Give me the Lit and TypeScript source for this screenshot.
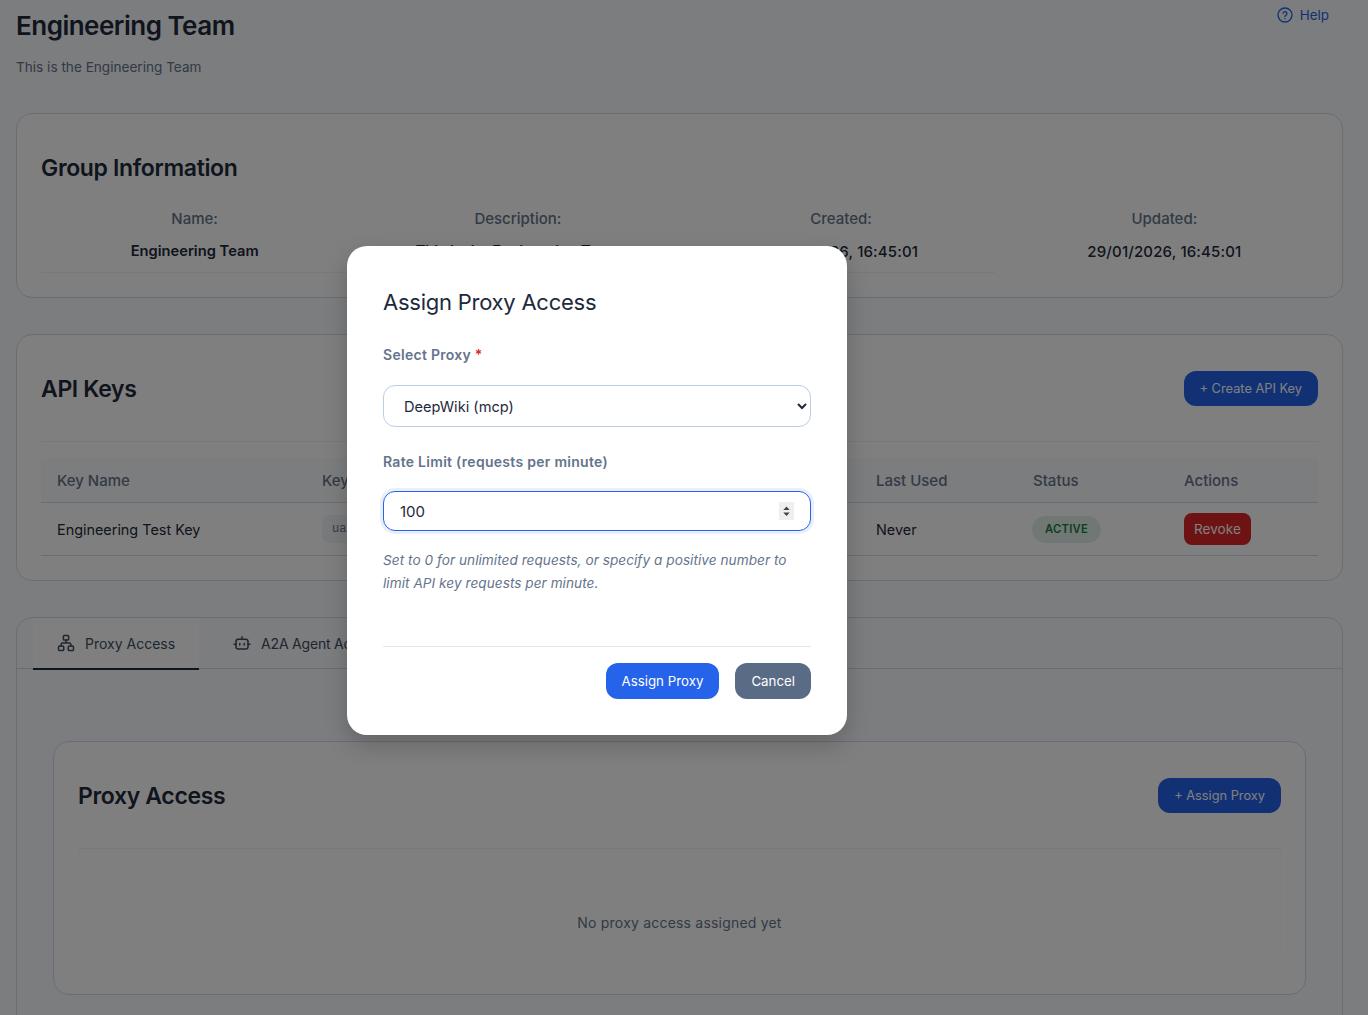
import {LitElement, html, css} from 'lit';
import {customElement} from 'lit/decorators.js';

const helpIcon = html`<svg class="help-icon" viewBox="0 0 24 24" fill="none" stroke="currentColor" stroke-width="2" stroke-linecap="round" stroke-linejoin="round"><circle cx="12" cy="12" r="10.5"/><path d="M9 9.2a3 3 0 0 1 5.9.8c0 2-3 2.6-3 4.2"/><path d="M12 17.6h.01"/></svg>`;

const proxyIcon = html`<svg class="tab-icon" viewBox="0 0 24 24" fill="none" stroke="currentColor" stroke-width="2" stroke-linecap="round" stroke-linejoin="round"><rect x="8.5" y="2" width="7" height="6" rx="1"/><rect x="2" y="16" width="7" height="6" rx="1.5"/><rect x="15" y="16" width="7" height="6" rx="1.5"/><path d="M12 8v4M5.5 16v-2a2 2 0 0 1 2-2h9a2 2 0 0 1 2 2v2"/></svg>`;

const botIcon = html`<svg class="tab-icon" viewBox="0 0 24 24" fill="none" stroke="currentColor" stroke-width="2" stroke-linecap="round" stroke-linejoin="round"><path d="M12 7V3.5"/><rect x="4" y="7" width="16" height="13" rx="3"/><path d="M1.5 13.5H4M20 13.5h2.5M9 12.5v2M15 12.5v2"/></svg>`;

@customElement('app-root')
export class AppRoot extends LitElement {
  render() {
    return html`
      <div class="page">
        <header class="head">
          <div>
            <h1>Engineering Team</h1>
            <p class="sub">This is the Engineering Team</p>
          </div>
          <a class="help">${helpIcon}Help</a>
        </header>

        <section class="card info">
          <h2>Group Information</h2>
          <div class="info-grid">
            <div class="info-item">
              <span class="info-label">Name:</span>
              <span class="info-value">Engineering Team</span>
            </div>
            <div class="info-item">
              <span class="info-label">Description:</span>
              <span class="info-value">This is the Engineering Team</span>
            </div>
            <div class="info-item">
              <span class="info-label">Created:</span>
              <span class="info-value date">29/01/2026, 16:45:01</span>
            </div>
            <div class="info-item last">
              <span class="info-label">Updated:</span>
              <span class="info-value date">29/01/2026, 16:45:01</span>
            </div>
          </div>
        </section>

        <section class="card keys">
          <div class="card-head">
            <h2>API Keys</h2>
            <button class="btn primary">+ Create API Key</button>
          </div>
          <table>
            <colgroup>
              <col class="c-name" /><col class="c-key" /><col class="c-created" />
              <col class="c-used" /><col class="c-status" /><col class="c-actions" />
            </colgroup>
            <thead>
              <tr>
                <th>Key Name</th><th>Key</th><th>Created</th>
                <th>Last Used</th><th>Status</th><th>Actions</th>
              </tr>
            </thead>
            <tbody>
              <tr>
                <td>Engineering Test Key</td>
                <td><code>uag_••••••••</code></td>
                <td>29/01/2026</td>
                <td>Never</td>
                <td><span class="badge">ACTIVE</span></td>
                <td><button class="btn danger">Revoke</button></td>
              </tr>
            </tbody>
          </table>
        </section>

        <section class="card tabs-card">
          <nav class="tabs">
            <div class="tab active">${proxyIcon}Proxy Access</div>
            <div class="tab agent">${botIcon}A2A Agent Access</div>
          </nav>
          <div class="tab-body">
            <div class="card inner">
              <div class="card-head">
                <h2>Proxy Access</h2>
                <button class="btn primary">+ Assign Proxy</button>
              </div>
              <div class="empty">No proxy access assigned yet</div>
            </div>
          </div>
        </section>
      </div>

      <div class="overlay"></div>
      <div class="modal">
        <h3>Assign Proxy Access</h3>
        <label class="select-label">Select Proxy <span class="req">*</span></label>
        <select>
          <option>DeepWiki (mcp)</option>
        </select>
        <label class="rate-label">Rate Limit (requests per minute)</label>
        <input type="number" value="100" />
        <p class="hint">Set to 0 for unlimited requests, or specify a positive number to limit API key requests per minute.</p>
        <div class="actions">
          <button class="btn modal-btn assign">Assign Proxy</button>
          <button class="btn modal-btn cancel">Cancel</button>
        </div>
      </div>
    `;
  }

  static get styles() {
    return css`
      :host {
        display: block;
        position: relative;
        height: 1015px;
        overflow: hidden;
        font-family: Inter, 'Liberation Sans', sans-serif;
        color: #1e293b;
        background: #f8fafc;
      }
      * {
        box-sizing: border-box;
      }
      .page {
        padding: 0 25px 0 16px;
      }
      .head {
        display: flex;
        justify-content: space-between;
        align-items: flex-start;
        height: 113px;
      }
      h1 {
        margin: 8px 0 0;
        font-size: 26px;
        line-height: 36px;
        font-weight: 600;
        letter-spacing: -0.5px;
      }
      .sub {
        margin: 13px 0 0;
        font-size: 13.6px;
        line-height: 20px;
        color: #64748b;
      }
      .help {
        display: flex;
        align-items: center;
        gap: 7px;
        margin: 6px 14px 0 0;
        font-size: 13.4px;
        line-height: 18px;
        color: #2563eb;
      }
      .help-icon {
        width: 16px;
        height: 16px;
      }
      .card {
        background: #fff;
        border: 1px solid #d3dcec;
        border-radius: 16px;
      }
      h2 {
        margin: 0;
        font-size: 23px;
        line-height: 32px;
        font-weight: 600;
        letter-spacing: -0.35px;
      }
      .info {
        height: 185px;
        padding: 38px 24px 0;
      }
      .info-grid {
        display: grid;
        grid-template-columns: repeat(4, 1fr);
        column-gap: 16px;
        margin-top: 21px;
      }
      .info-item {
        display: flex;
        flex-direction: column;
        align-items: center;
        height: 68px;
        padding-top: 4px;
        border-bottom: 1px solid #eef1f6;
        text-align: center;
      }
      .info-item.last {
        border-bottom: 0;
      }
      .info-label {
        font-size: 15px;
        line-height: 20px;
        font-weight: 500;
        color: #64748b;
      }
      .info-value {
        margin-top: 12px;
        font-size: 14.7px;
        line-height: 20px;
        font-weight: 600;
      }
      .info-value.date {
        margin-top: 13px;
        font-size: 15px;
        font-weight: 500;
        letter-spacing: 0.15px;
      }
      .keys {
        height: 247px;
        margin-top: 36px;
        padding: 0 24px;
      }
      .card-head {
        display: flex;
        justify-content: space-between;
        align-items: center;
        height: 107px;
        padding-top: 2px;
        border-bottom: 1px solid #eef1f6;
      }
      .btn {
        border: 0;
        font-family: inherit;
        line-height: 18px;
        color: #fff;
      }
      .btn.primary {
        height: 35px;
        margin-top: -1px;
        padding: 0 16px;
        border-radius: 12px;
        background: #2563eb;
        font-size: 12.8px;
      }
      table {
        width: 100%;
        margin-top: 16px;
        border-collapse: collapse;
        table-layout: fixed;
      }
      .c-name {
        width: 265px;
      }
      .c-key {
        width: 294px;
      }
      .c-created {
        width: 260px;
      }
      .c-used {
        width: 157px;
      }
      .c-status {
        width: 151px;
      }
      th {
        height: 44px;
        padding: 1px 16px 0;
        text-align: left;
        font-size: 15px;
        font-weight: 500;
        color: #64748b;
        background: #f8fafc;
        border-bottom: 1px solid #d3dcec;
      }
      td {
        height: 53px;
        padding: 1px 16px 0;
        font-size: 14.4px;
        color: #1e293b;
        border-bottom: 1px solid #d3dcec;
      }
      code {
        display: inline-block;
        padding: 7px 10px;
        border-radius: 8px;
        background: #f1f5f9;
        font-family: 'Liberation Mono', monospace;
        font-size: 12px;
        color: #64748b;
        white-space: nowrap;
      }
      .badge {
        display: inline-block;
        margin-left: -1px;
        padding: 5px 13px;
        border-radius: 14px;
        background: #e2efe9;
        color: #15803d;
        font-size: 11.2px;
        line-height: 17px;
        font-weight: 600;
        letter-spacing: 0.3px;
      }
      .btn.danger {
        display: block;
        height: 32px;
        margin-top: -1px;
        padding: 0 10px;
        border-radius: 8px;
        background: #dc2626;
        font-size: 13.6px;
      }
      .tabs-card {
        height: 520px;
        margin-top: 36px;
        background: #f8fafc;
      }
      .tabs {
        display: flex;
        gap: 10px;
        height: 51px;
        padding-left: 16px;
        border-bottom: 1px solid #d3dcec;
      }
      .tab {
        display: flex;
        align-items: center;
        gap: 10px;
        height: 52px;
        padding: 0 24px;
        border-bottom: 2px solid transparent;
        font-size: 14px;
        color: #3f4d63;
      }
      .tab.agent {
        letter-spacing: -0.2px;
      }
      .tab.active {
        background: #fff;
        border-bottom-color: #1e293b;
      }
      .tab-icon {
        width: 18px;
        height: 18px;
      }
      .tab-body {
        padding: 72px 36px 0;
      }
      .inner {
        height: 254px;
        padding: 0 24px;
      }
      .empty {
        height: 121px;
        padding-top: 64px;
        text-align: center;
        font-size: 14px;
        line-height: 20px;
        letter-spacing: 0.2px;
        color: #64748b;
        border: 1px solid #fafbfd;
        border-top: 0;
        border-radius: 0 0 16px 16px;
      }
      .overlay {
        position: absolute;
        inset: 0;
        background: rgba(0, 0, 0, 0.5);
      }
      .modal {
        position: absolute;
        left: 347px;
        top: 246px;
        width: 500px;
        height: 489px;
        padding: 0 36px;
        background: #fff;
        border-radius: 20px;
        box-shadow: 0 10px 25px rgba(0, 0, 0, 0.2);
      }
      h3 {
        margin: 40px 0 0;
        font-size: 22px;
        line-height: 32px;
        font-weight: 400;
        letter-spacing: -0.25px;
      }
      label {
        display: block;
        font-size: 14px;
        line-height: 20px;
        font-weight: 600;
        letter-spacing: 0.28px;
        color: #64748b;
      }
      .select-label {
        margin-top: 27px;
      }
      .req {
        color: #dc2626;
      }
      select {
        display: block;
        width: 100%;
        height: 42px;
        margin-top: 20px;
        padding: 1px 16px 0;
        border: 1px solid #bccde8;
        border-radius: 12px;
        background: #fff;
        font-family: inherit;
        font-size: 14.6px;
        color: #1e293b;
      }
      .rate-label {
        margin-top: 25px;
      }
      input {
        display: block;
        width: 100%;
        height: 40px;
        margin-top: 19px;
        padding: 0 16px;
        border: 1.5px solid #2563eb;
        border-radius: 12px;
        outline: 0;
        box-shadow: 0 0 0 3px rgba(37, 99, 235, 0.1);
        font-family: inherit;
        font-size: 15px;
        color: #1e293b;
      }
      input::-webkit-inner-spin-button {
        -webkit-appearance: none;
        appearance: none;
        opacity: 1;
        width: 15px;
        height: 18px;
        background: #efefef url("data:image/svg+xml,%3Csvg xmlns='http://www.w3.org/2000/svg' width='15' height='18'%3E%3Cpath d='M7.5 4.5l3.2 3.5H4.3zM7.5 14l-3.2-3.5h6.4z' fill='%23444'/%3E%3C/svg%3E") no-repeat center;
      }
      .hint {
        margin: 18px 0 0;
        font-size: 13.6px;
        line-height: 23px;
        font-style: italic;
        letter-spacing: 0.05px;
        color: #64748b;
      }
      .actions {
        display: flex;
        justify-content: flex-end;
        gap: 16px;
        margin-top: 51px;
        padding-top: 16px;
        border-top: 1px solid #e2e8f0;
      }
      .modal-btn {
        height: 36px;
        padding: 0 16px;
        border-radius: 12px;
        font-size: 13.3px;
      }
      .assign {
        background: #2563eb;
      }
      .cancel {
        background: #5a6b85;
      }
    `;
  }
}
